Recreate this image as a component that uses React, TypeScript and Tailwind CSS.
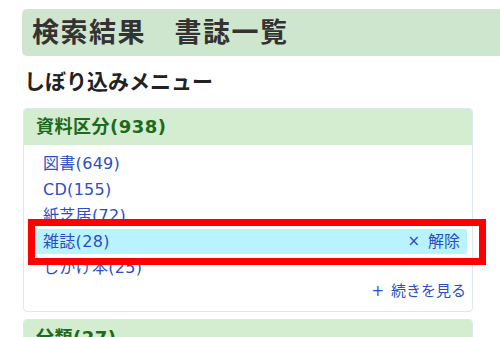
import React from 'react';

type Facet = { label: string; count: number; selected?: boolean };

const materialFacets: Facet[] = [
  { label: '図書', count: 649 },
  { label: 'CD', count: 155 },
  { label: '紙芝居', count: 72 },
  { label: '雑誌', count: 28, selected: true },
  { label: 'しかけ本', count: 25 },
];

// Latin in a Verdana-like face (wide digits), Japanese falls through to Noto CJK
const font = "font-['DejaVu_Sans','Noto_Sans_CJK_JP',sans-serif]";

const FacetItem: React.FC<{ facet: Facet }> = ({ facet }) => {
  if (facet.selected) {
    return (
      <div className="relative">
        {/* annotation frame */}
        <div className="absolute -left-[5px] -right-[19px] -top-[10px] -bottom-[11px] border-[7px] border-[#ff0000] pointer-events-none z-10" />
        <div className="h-[25px] flex items-center justify-between pl-[10px] pr-[7px] bg-[#b9f3fd] rounded-[3px] text-[16px] text-[#2a4ec8]">
          <span className="tracking-[0.3px]">{facet.label}({facet.count})</span>
          <span className="flex items-center gap-[8px]">
            <span className="text-[15px]">×</span>
            <span>解除</span>
          </span>
        </div>
      </div>
    );
  }
  return (
    <div className="h-[25px] flex items-center pl-[10px] text-[16px] text-[#2a4ec8] tracking-[0.3px]">
      {facet.label}({facet.count})
    </div>
  );
};

export default function App() {
  return (
    <div className={`w-[500px] h-[337px] overflow-hidden bg-white ${font}`}>
      {/* Page title */}
      <div className="pt-[9px] pl-[22px]">
        <div className="w-[500px] h-[47px] bg-[#cfe6ce] rounded-l-[5px] flex items-center pl-[10px]">
          <h1 className="text-[27px] tracking-[1.5px] font-bold text-[#333333] leading-none whitespace-pre">検索結果　書誌一覧</h1>
        </div>
      </div>

      {/* Filter menu heading */}
      <h2 className="mt-[14px] ml-[24px] text-[21px] font-bold text-[#222222] leading-[24px]">しぼり込みメニュー</h2>

      {/* Material type facet */}
      <div className="mt-[14px] ml-[23px] w-[450px] rounded-[4px] border border-[#dbe7f2]">
        <div className="h-[36px] bg-[#d4ecd0] rounded-t-[3px] flex items-center px-[12px]">
          <h3 className="text-[18px] font-bold text-[#1d6a1d] leading-none tracking-[0.5px]">資料区分(938)</h3>
        </div>
        <div className="pl-[9px] pr-[5px] pt-[6px] pb-[10px]">
          <div className="flex flex-col gap-[1px]">
            {materialFacets.map((f) => (
              <FacetItem key={f.label} facet={f} />
            ))}
          </div>
          <div className="h-[20px] mt-[1px] flex items-center justify-end pr-[1px] text-[15px] text-[#2a4ec8]">
            <span className="mr-[7px]">+</span>
            <span>続きを見る</span>
          </div>
        </div>
      </div>

      {/* Classification facet */}
      <div className="mt-[7px] ml-[23px] w-[450px] rounded-[4px] border border-[#dbe7f2]">
        <div className="h-[36px] bg-[#d4ecd0] rounded-t-[3px] flex items-center px-[12px]">
          <h3 className="text-[18px] font-bold text-[#1d6a1d] leading-none tracking-[0.5px]">分類(27)</h3>
        </div>
      </div>
    </div>
  );
}
